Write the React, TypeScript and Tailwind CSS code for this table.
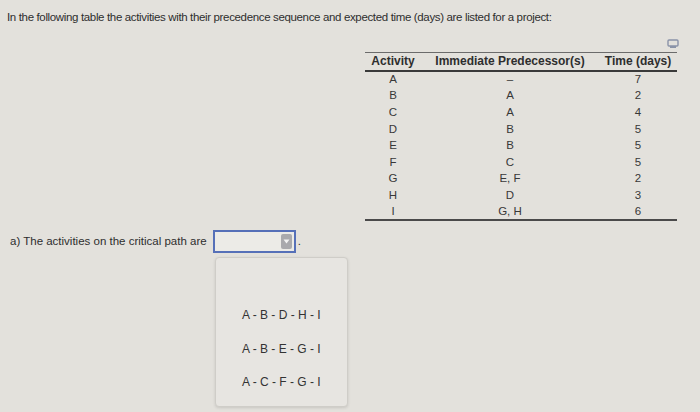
import React from "react"

const rows = [
  ["A", "–", "7"],
  ["B", "A", "2"],
  ["C", "A", "4"],
  ["D", "B", "5"],
  ["E", "B", "5"],
  ["F", "C", "5"],
  ["G", "E, F", "2"],
  ["H", "D", "3"],
  ["I", "G, H", "6"],
]

const options = ["", "A - B - D - H - I", "A - B - E - G - I", "A - C - F - G - I"]

export default function App() {
  return (
    <div className="h-[412px] w-[700px] overflow-hidden bg-[#e3e1dc] font-['Liberation_Sans',Arial,sans-serif] text-[#2e2e2e]">
      {/* intro */}
      <p className="pl-[7px] pt-[9px] text-[11.5px] leading-[16px] tracking-[-0.35px]">
        In the following table the activities with their precedence sequence and expected time (days) are listed for a project:
      </p>

      {/* table */}
      <div className="relative ml-[365px] mt-[27px] w-[312px]">
        <svg className="absolute -top-[13px] right-[-2px]" width="12" height="10" viewBox="0 0 12 10">
          <rect x="1" y="1" width="10" height="6" rx="1" fill="none" stroke="#8a93a8" strokeWidth="1.4" />
          <rect x="3" y="7" width="6" height="2" fill="#8a93a8" />
        </svg>
        <table className="w-full border-collapse text-[12px]">
          <thead>
            <tr className="h-[18px] border-t border-b-2 border-t-[#6b6b6b] border-b-[#3a3a3a]">
              <th className="w-[56px] p-0 text-center font-bold leading-[16px]">Activity</th>
              <th className="w-[178px] p-0 text-center font-bold leading-[16px]">Immediate Predecessor(s)</th>
              <th className="p-0 text-center font-bold leading-[16px]">Time (days)</th>
            </tr>
          </thead>
          <tbody className="border-b-2 border-b-[#4a4a4a] text-[11.5px] text-[#383838]">
            {rows.map((r) => (
              <tr key={r[0]} className="h-[16.6px]">
                <td className="p-0 text-center leading-[14px]">{r[0]}</td>
                <td className="p-0 text-center leading-[14px]">{r[1]}</td>
                <td className="p-0 text-center leading-[14px]">{r[2]}</td>
              </tr>
            ))}
          </tbody>
        </table>
      </div>

      {/* question */}
      <div className="mt-[9px] flex items-center pl-[10px] text-[11.5px]">
        <span>a) The activities on the critical path are</span>
        <div className="ml-[6px] flex h-[23px] w-[83px] items-center justify-end border-2 border-[#5670b8] bg-[#ecebe7] pr-[2px]">
          <div className="flex h-[15px] w-[11px] items-center justify-center rounded-[2px] bg-[#a9a9ad]">
            <svg width="7" height="5" viewBox="0 0 7 5">
              <path d="M0.5 0.5h6L3.5 4.5z" fill="#f2f2f2" />
            </svg>
          </div>
        </div>
        <span className="ml-[2px]">.</span>
      </div>

      {/* dropdown list */}
      <div className="ml-[215px] mt-[4px] flex w-[133px] flex-col rounded-[4px] border border-[#cfcdc8] bg-[#e7e5e1] py-[7px] shadow-[0_1px_3px_rgba(0,0,0,0.12)]">
        {options.map((o, i) => (
          <div key={i} className="flex h-[33.5px] items-center pl-[26px] text-[12px] text-[#333]">
            {o}
          </div>
        ))}
      </div>
    </div>
  )
}
